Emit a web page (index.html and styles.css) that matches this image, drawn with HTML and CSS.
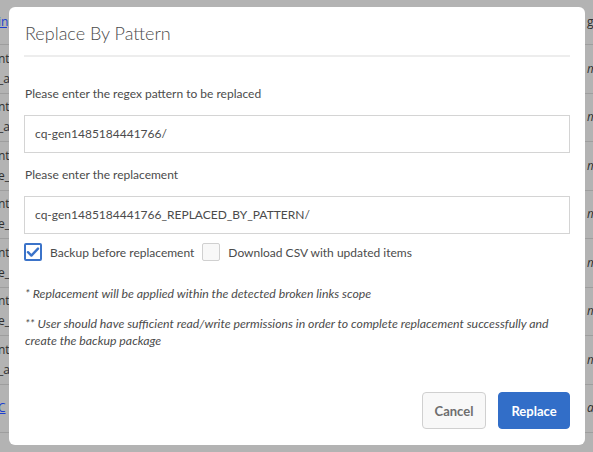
FILE: index.html
```html
<!DOCTYPE html>
<html>
<head>
<meta charset="utf-8">
<link rel="stylesheet" href="styles.css">
</head>
<body>
<div class="page">
  <div class="table">
    <div class="row first"><span class="lcell link">ing</span><span class="rcell">ge</span></div>
    <div class="row"><span class="lcell">nte<br>_a</span><span class="rcell it">m</span></div>
    <div class="row"><span class="lcell">nte<br>_a</span><span class="rcell it">m</span></div>
    <div class="row"><span class="lcell">nte<br>e_</span><span class="rcell it">m</span></div>
    <div class="row"><span class="lcell">nte<br>e_</span><span class="rcell it">m</span></div>
    <div class="row"><span class="lcell">nte<br>e_</span><span class="rcell it">m</span></div>
    <div class="row"><span class="lcell">nte<br>e_</span><span class="rcell it">m</span></div>
    <div class="row"><span class="lcell">nte<br>_a</span><span class="rcell it">m</span></div>
    <div class="row"><span class="lcell link">C</span><span class="rcell it">ag</span></div>
  </div>

  <div class="dialog">
    <div class="dialog-header">
      <h1 class="title">Replace By Pattern</h1>
    </div>
    <div class="dialog-body">
      <label class="field-label">Please enter the regex pattern to be replaced</label>
      <div class="input">cq-gen1485184441766/</div>
      <label class="field-label second">Please enter the replacement</label>
      <div class="input">cq-gen1485184441766_REPLACED_BY_PATTERN/</div>
      <div class="checks">
        <span class="checkbox checked">
          <svg viewBox="0 0 18 18" width="18" height="18"><path d="M4 9.2 L7.4 12.6 L14 5.6" fill="none" stroke="#3b73c9" stroke-width="2.4" stroke-linecap="round" stroke-linejoin="round"/></svg>
        </span>
        <span class="check-label">Backup before replacement</span>
        <span class="checkbox"></span>
        <span class="check-label">Download CSV with updated items</span>
      </div>
      <p class="note n1">* Replacement will be applied within the detected broken links scope</p>
      <p class="note n2">** User should have sufficient read/write permissions in order to complete replacement successfully and create the backup package</p>
    </div>
    <div class="dialog-footer">
      <button class="btn btn-cancel">Cancel</button>
      <button class="btn btn-primary">Replace</button>
    </div>
  </div>
</div>
</body>
</html>
```

FILE: styles.css
```css
* { box-sizing: border-box; }
html, body { margin: 0; padding: 0; }
body {
  width: 593px;
  height: 452px;
  overflow: hidden;
  background: #b3b3b3;
  font-family: "Lato", "Open Sans", sans-serif;
  color: #4b4b4b;
}
.page {
  position: relative;
  width: 593px;
  height: 452px;
  overflow: hidden;
}
.table {
  display: flex;
  flex-direction: column;
}
.row {
  display: flex;
  justify-content: space-between;
  height: 48.5px;
  border-bottom: 1px solid #9e9e9e;
  font-family: "Open Sans", sans-serif;
  font-size: 12px;
  line-height: 20px;
  color: #2e2e2e;
  align-items: center;
}
.row.first { height: 45px; }
.lcell { margin-left: -2px; }
.rcell { margin-right: -3px; width: 9px; }
.it { font-style: italic; }
.link { color: #1c3fd0; text-decoration: underline; }

.dialog {
  position: absolute;
  left: 9px;
  top: 7px;
  width: 576px;
  height: 438px;
  background: #fff;
  border-radius: 6px;
  display: flex;
  flex-direction: column;
  padding: 0 15px 16px 15px;
}
.dialog-header {
  padding-top: 14px;
  padding-bottom: 10px;
  border-bottom: 2px solid #ededed;
}
.title {
  margin: 0 0 0 1px;
  font-size: 18px;
  line-height: 24px;
  font-weight: 300;
  color: #4b4b4b;
}
.dialog-body {
  display: flex;
  flex-direction: column;
}
.field-label {
  display: block;
  margin: 29px 0 0 1px;
  font-size: 12px;
  line-height: 16px;
}
.field-label.second { margin-top: 14px; }
.input {
  margin-top: 13px;
  height: 38px;
  border: 1px solid #d4d4d4;
  padding: 0 10px;
  font-size: 12px;
  line-height: 36px;
  color: #4b4b4b;
}
.checks {
  display: flex;
  align-items: center;
  margin-top: 9px;
  height: 18px;
}
.checkbox {
  width: 18px;
  height: 18px;
  border: 1px solid #d0d0d0;
  background: #f8f8f8;
  border-radius: 2px;
  display: flex;
  align-items: center;
  justify-content: center;
  flex: none;
}
.checkbox.checked {
  border: 2px solid #3b73c9;
  background: #fff;
}
.checkbox svg { display: block; flex: none; }
.check-label {
  font-size: 12px;
  margin: 0 8px 0 8px;
}
.note {
  margin: 24px 0 0 1px;
  font-size: 12.3px;
  line-height: 17px;
  font-style: italic;
}
.note.n2 { margin-top: 13px; }
.dialog-footer {
  margin-top: auto;
  display: flex;
  justify-content: flex-end;
  gap: 12px;
}
.btn {
  height: 37px;
  border-radius: 4px;
  font-family: "Lato", "Open Sans", sans-serif;
  font-size: 13px;
  font-weight: 700;
  padding: 0;
}
.btn-cancel {
  width: 64px;
  background: #f8f8f8;
  border: 1px solid #d0d0d0;
  color: #6e6e6e;
}
.btn-primary {
  width: 72px;
  background: #326ec8;
  border: 1px solid #326ec8;
  color: #fff;
}
```
